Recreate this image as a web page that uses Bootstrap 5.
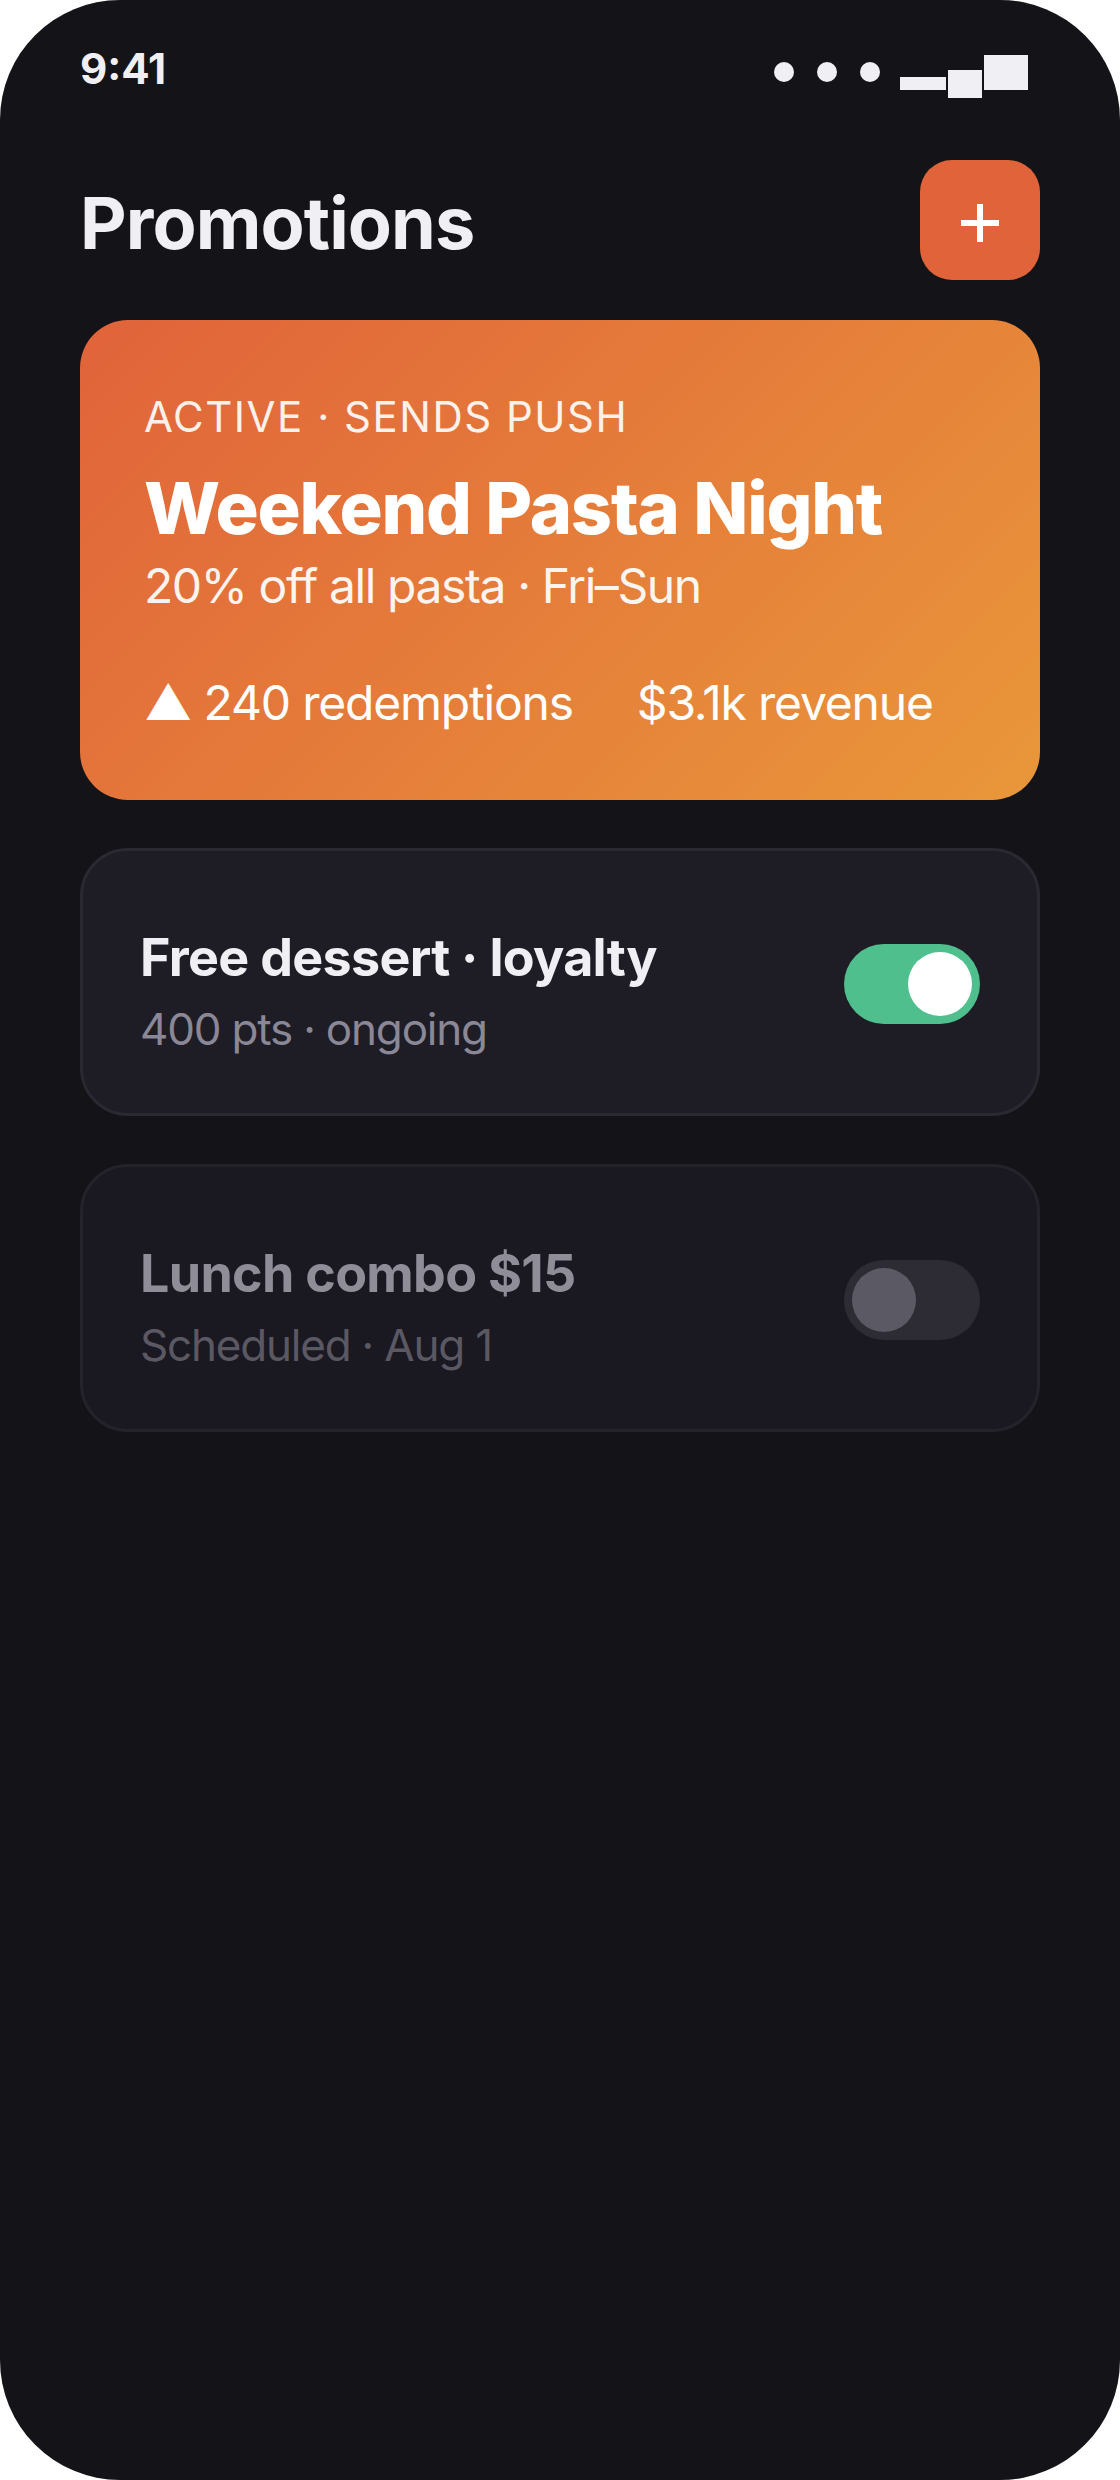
<!DOCTYPE html>
<html lang="en">
<head>
    <meta charset="UTF-8">
    <meta name="viewport" content="width=device-width, initial-scale=1.0">
    <title>Promotions</title>
    <link rel="stylesheet" href="https://cdn.jsdelivr.net/npm/bootstrap@5.3.3/dist/css/bootstrap.min.css">
    <style>
        body {
            background-color: #fff;
            font-family: Inter, "Liberation Sans", sans-serif;
        }
        .phone {
            width: 1120px;
            height: 2480px;
            background-color: #141318;
            border-radius: 120px;
            overflow: hidden;
            padding: 0 80px;
            color: #f0eff4;
        }
        .status-row {
            height: 160px;
        }
        .clock {
            font-size: 42px;
            font-weight: 700;
            line-height: 1;
            margin-top: 48px;
        }
        .status-icons {
            margin-top: 55px;
            margin-right: 12px;
            height: 35px;
        }
        .dot {
            width: 20px;
            height: 20px;
            border-radius: 50%;
            background-color: #f0eff4;
            margin-right: 23px;
            margin-bottom: 8px;
        }
        .dot.last {
            margin-right: 20px;
        }
        .sig {
            background-color: #f0eff4;
        }
        .sig-1 { width: 46px; height: 13px; margin-right: 2px; }
        .sig-2 { width: 34px; height: 28px; margin-right: 2px; margin-bottom: -8px; }
        .sig-3 { width: 44px; height: 35px; }
        .top-row {
            height: 120px;
            margin-bottom: 40px;
        }
        .page-title {
            font-size: 72px;
            font-weight: 700;
            margin: 6px 0 0;
            line-height: 1;
            letter-spacing: -.9px;
        }
        .add-btn {
            width: 120px;
            height: 120px;
            background-color: #e1633a;
            border-radius: 32px;
            color: #fff;
            border: 0;
            padding: 5px 0 0;
        }
        .promo-hero {
            height: 480px;
            border-radius: 48px;
            background: linear-gradient(135deg, #e1633a 0%, #e9973a 100%);
            padding: 64px 64px 0;
            color: #fff;
        }
        .hero-tag {
            font-size: 42px;
            line-height: 1;
            margin-top: 12px;
            letter-spacing: 1.5px;
            opacity: .9;
        }
        .hero-name {
            font-size: 72px;
            font-weight: 800;
            line-height: 1;
            margin: 34px 0 0;
            letter-spacing: -1.2px;
        }
        .hero-sub {
            font-size: 48px;
            line-height: 1;
            margin-top: 18px;
            letter-spacing: -1.4px;
            opacity: .92;
        }
        .hero-stats {
            font-size: 48px;
            line-height: 1;
            margin-top: 69px;
            letter-spacing: -1.2px;
            gap: 64px;
        }
        .offer {
            height: 268px;
            border-radius: 48px;
            border: 3px solid #2a2932;
            background-color: #1e1c24;
            padding: 0 57px;
            margin-top: 48px;
        }
        .offer.muted-offer {
            background-color: #1a1820;
            border-color: #24232b;
        }
        .offer-text {
            padding-top: 19px;
        }
        .offer-name {
            font-size: 52px;
            font-weight: 700;
            line-height: 1;
            letter-spacing: -.7px;
        }
        .offer-sub {
            font-size: 44px;
            line-height: 1;
            margin-top: 23px;
            letter-spacing: -1.2px;
            color: #8a8796;
        }
        .muted-offer .offer-name { color: #8f8d97; }
        .muted-offer .offer-sub { color: #5a5862; }
        .switch-track {
            width: 136px;
            height: 80px;
            border-radius: 40px;
            padding: 8px;
            margin-top: 3px;
            background-color: #4fc08d;
        }
        .switch-track.off {
            background-color: #2d2b33;
        }
        .switch-knob {
            width: 64px;
            height: 64px;
            border-radius: 50%;
            background-color: #fff;
        }
        .switch-track.off .switch-knob {
            background-color: #5b5964;
        }
    </style>
</head>
<body>
    <div class="phone">
        <!-- Status bar -->
        <div class="status-row d-flex justify-content-between align-items-start">
            <div class="clock">9:41</div>
            <div class="status-icons d-flex align-items-end">
                <span class="dot"></span>
                <span class="dot"></span>
                <span class="dot last"></span>
                <span class="sig sig-1"></span>
                <span class="sig sig-2"></span>
                <span class="sig sig-3"></span>
            </div>
        </div>

        <!-- Header -->
        <div class="top-row d-flex justify-content-between align-items-center">
            <h1 class="page-title">Promotions</h1>
            <button class="add-btn d-flex align-items-center justify-content-center" type="button" aria-label="Add promotion">
                <svg width="38" height="38" viewBox="0 0 38 38"><path d="M19 0v38M0 19h38" stroke="#fff" stroke-width="6" fill="none"/></svg>
            </button>
        </div>

        <!-- Active promotion -->
        <div class="promo-hero">
            <div class="hero-tag">ACTIVE · SENDS PUSH</div>
            <div class="hero-name">Weekend Pasta Night</div>
            <div class="hero-sub">20% off all pasta · Fri–Sun</div>
            <div class="hero-stats d-flex">
                <span>▲ 240 redemptions</span>
                <span>$3.1k revenue</span>
            </div>
        </div>

        <!-- Other promotions -->
        <div class="offer d-flex align-items-center justify-content-between">
            <div class="offer-text">
                <div class="offer-name">Free dessert · loyalty</div>
                <div class="offer-sub">400 pts · ongoing</div>
            </div>
            <div class="switch-track d-flex justify-content-end"><div class="switch-knob"></div></div>
        </div>
        <div class="offer muted-offer d-flex align-items-center justify-content-between">
            <div class="offer-text">
                <div class="offer-name">Lunch combo $15</div>
                <div class="offer-sub">Scheduled · Aug 1</div>
            </div>
            <div class="switch-track off d-flex"><div class="switch-knob"></div></div>
        </div>
    </div>
    <script src="https://cdn.jsdelivr.net/npm/bootstrap@5.3.3/dist/js/bootstrap.bundle.min.js"></script>
</body>
</html>
